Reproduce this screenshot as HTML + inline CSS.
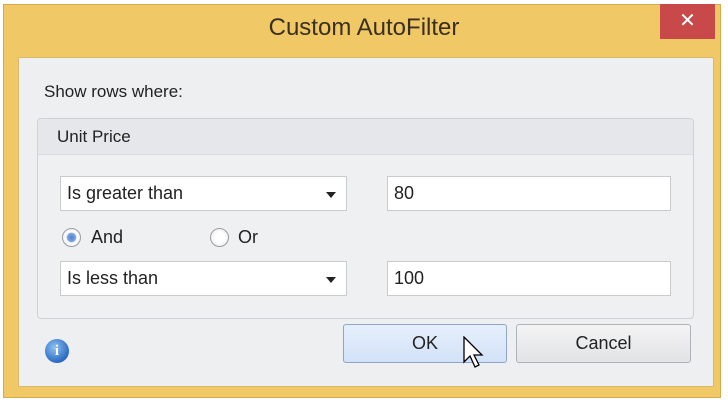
<!DOCTYPE html>
<html><head><style>
*{margin:0;padding:0;box-sizing:border-box}
body{width:728px;height:403px;background:#fff;position:relative;overflow:hidden;font-family:"Liberation Sans",sans-serif;color:#222}
.abs{position:absolute}
.frame{left:3px;top:4px;width:718px;height:394px;background:#f0c865;border:1px solid #d8a94a}
.client{left:18px;top:57px;width:696px;height:330px;background:#eeeff1;border:1px solid #d9b870}
.close{left:660px;top:4px;width:55px;height:35px;background:#c9494a;color:#fff;font-size:20px;text-align:center;line-height:34px}
.title{left:0;top:14px;width:728px;text-align:center;font-size:24px;color:#3a3022}
.grp{left:37px;top:118px;width:657px;height:201px;border:1px solid #cfd1d4;border-radius:4px;background:#eef0f2}
.grph{left:38px;top:119px;width:655px;height:36px;background:#e6e7ea;border-bottom:1px solid #dadcdf;border-radius:4px 4px 0 0}
.box{background:#fff;border:1px solid #c8cacd;font-size:18px;padding-left:6px;line-height:33px}
.arr{position:absolute;right:10px;top:15px;width:0;height:0;border-left:5px solid transparent;border-right:5px solid transparent;border-top:6px solid #222}
.rad{width:19px;height:19px;border-radius:50%;border:1px solid #9a9ca0;background:radial-gradient(circle,#fff 40%,#e3e4e6 100%)}
.btn{border:1px solid #aeb3ba;border-radius:3px;font-size:18px;text-align:center;line-height:36px}
</style></head><body>
<div class="abs" style="left:0;top:0;width:728px;height:5px;background:#fff"></div>
<div class="abs frame"></div>
<div class="abs title">Custom AutoFilter</div>
<div class="abs close">✕</div>
<div class="abs client"></div>
<div class="abs" style="left:44px;top:82px;font-size:17px">Show rows where:</div>
<div class="abs grp"></div>
<div class="abs grph"></div>
<div class="abs" style="left:57px;top:127px;font-size:17px">Unit Price</div>
<div class="abs box" style="left:60px;top:176px;width:287px;height:35px">Is greater than<span class="arr"></span></div>
<div class="abs box" style="left:387px;top:176px;width:284px;height:35px">80</div>
<div class="abs rad" style="left:62px;top:228px;background:radial-gradient(circle,#4f7fd0 0,#7fa6e0 35%,#fff 45%,#dfe6f1 100%)"></div>
<div class="abs" style="left:91px;top:227px;font-size:18px">And</div>
<div class="abs rad" style="left:210px;top:228px"></div>
<div class="abs" style="left:238px;top:227px;font-size:18px">Or</div>
<div class="abs box" style="left:60px;top:261px;width:287px;height:35px">Is less than<span class="arr"></span></div>
<div class="abs box" style="left:387px;top:261px;width:284px;height:35px">100</div>
<div class="abs" style="left:45px;top:339px;width:24px;height:24px;border-radius:50%;background:radial-gradient(circle at 40% 35%,#8fc0f0,#2a6cc4 70%,#1d4f9a);color:#fff;font:bold 15px 'Liberation Serif',serif;text-align:center;line-height:24px">i</div>
<div class="abs btn" style="left:343px;top:324px;width:164px;height:39px;background:linear-gradient(#e6effc,#d3e2f7);border-color:#8ea6c8">OK</div>
<div class="abs btn" style="left:516px;top:324px;width:175px;height:39px;background:linear-gradient(#f4f4f5,#e2e3e5)">Cancel</div>
<svg class="abs" style="left:463px;top:336px" width="24" height="38" viewBox="0 0 24 38"><path d="M1 1 L1 26 L7 20 L12 31 L16 29 L11 19 L19 19 Z" fill="#fff" stroke="#000" stroke-width="1.3"/></svg>
</body></html>
